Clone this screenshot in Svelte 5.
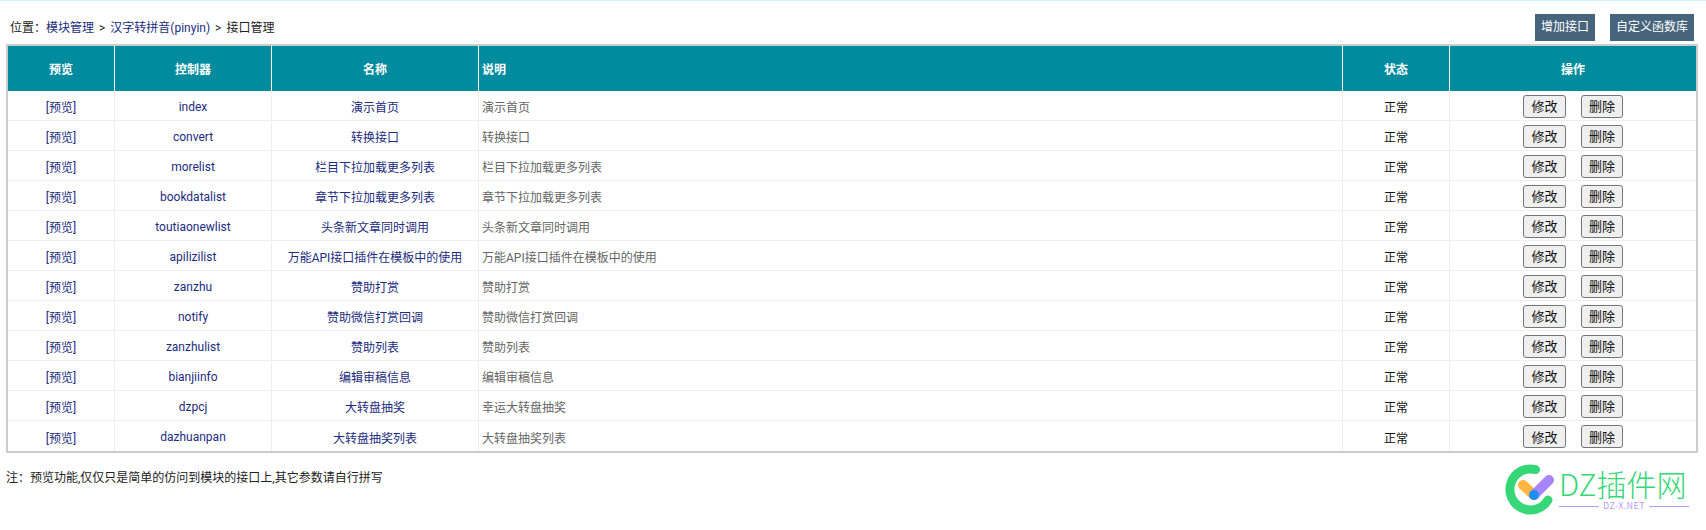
<script>
	const rows = [
		['index', '演示首页', '演示首页'],
		['convert', '转换接口', '转换接口'],
		['morelist', '栏目下拉加载更多列表', '栏目下拉加载更多列表'],
		['bookdatalist', '章节下拉加载更多列表', '章节下拉加载更多列表'],
		['toutiaonewlist', '头条新文章同时调用', '头条新文章同时调用'],
		['apilizilist', '万能API接口插件在模板中的使用', '万能API接口插件在模板中的使用'],
		['zanzhu', '赞助打赏', '赞助打赏'],
		['notify', '赞助微信打赏回调', '赞助微信打赏回调'],
		['zanzhulist', '赞助列表', '赞助列表'],
		['bianjiinfo', '编辑审稿信息', '编辑审稿信息'],
		['dzpcj', '大转盘抽奖', '幸运大转盘抽奖'],
		['dazhuanpan', '大转盘抽奖列表', '大转盘抽奖列表']
	];
</script>

<div class="page">
	<div class="topbar">
		<div class="crumbs">
			位置：<a href="#m">模块管理</a><span class="sep">&gt;</span><a href="#p">汉字转拼音(pinyin)</a><span class="sep">&gt;</span>接口管理
		</div>
		<div class="top-actions">
			<a class="top-btn add" href="#a">增加接口</a>
			<a class="top-btn lib" href="#f">自定义函数库</a>
		</div>
	</div>

	<div class="table-wrap">
		<table>
			<colgroup>
				<col style="width: 106px" />
				<col style="width: 157px" />
				<col style="width: 207px" />
				<col />
				<col style="width: 107px" />
				<col style="width: 247px" />
			</colgroup>
			<thead>
				<tr>
					<th>预览</th>
					<th>控制器</th>
					<th>名称</th>
					<th class="left">说明</th>
					<th>状态</th>
					<th>操作</th>
				</tr>
			</thead>
			<tbody>
				{#each rows as row}
					<tr>
						<td><a href="#v">[预览]</a></td>
						<td><a href="#c">{row[0]}</a></td>
						<td><a href="#n">{row[1]}</a></td>
						<td class="desc">{row[2]}</td>
						<td>正常</td>
						<td class="ops">
							<button class="edit">修改</button>
							<button class="del">删除</button>
						</td>
					</tr>
				{/each}
			</tbody>
		</table>
	</div>

	<p class="note">注：预览功能,仅仅只是简单的仿问到模块的接口上,其它参数请自行拼写</p>

	<div class="watermark">
		<svg width="56" height="56" viewBox="0 0 56 56" fill="none">
			<path d="M32.5 7.6 A20.5 20.5 0 1 0 45 38" stroke="#36d777" stroke-width="9" stroke-linecap="round" />
			<path d="M20 23 L31 33" stroke="#ffb83f" stroke-width="10" stroke-linecap="round" />
			<path d="M31 33 L46 18" stroke="#a884fa" stroke-width="10" stroke-linecap="round" />
			<circle cx="31" cy="33" r="5" fill="#1e8eff" />
		</svg>
		<div class="brand">
			<div class="brand-name">DZ插件网</div>
			<div class="brand-sub"><span class="rule"></span><span>DZ-X.NET</span><span class="rule"></span></div>
		</div>
	</div>
</div>

<style>
	:global(body) {
		margin: 0;
		background: #fff;
	}

	.page {
		position: relative;
		height: 530px;
		box-sizing: border-box;
		border-top: 1px solid #ccf2ff;
		padding: 0 8px 0 6px;
		font-family: Roboto, "Noto Sans CJK SC", sans-serif;
		font-size: 12px;
		color: #222;
		overflow: hidden;
	}

	a {
		color: #1c2c80;
		text-decoration: none;
	}

	.topbar {
		display: flex;
		justify-content: space-between;
		align-items: center;
		height: 43px;
		box-sizing: border-box;
	}

	.crumbs {
		padding: 11px 0 0 4px;
		line-height: 16px;
	}

	.sep {
		margin: 0 5px;
	}

	.top-actions {
		display: flex;
		gap: 15px;
		padding: 9px 4px 0 0;
	}

	.top-btn {
		display: block;
		height: 27px;
		line-height: 27px;
		text-align: center;
		background: #46647c;
		color: #fff;
	}

	.add {
		width: 60px;
	}

	.lib {
		width: 84px;
	}

	.table-wrap {
		border: 2px solid #ccc;
	}

	table {
		width: 100%;
		border-collapse: separate;
		border-spacing: 0;
		table-layout: fixed;
	}

	th {
		height: 45px;
		padding: 0;
		background: #008c9e;
		color: #fff;
		font-weight: 700;
		text-align: center;
		border-left: 1px solid #fff;
	}

	th:first-child,
	td:first-child {
		border-left: 0;
	}

	th.left {
		text-align: left;
		padding-left: 3px;
	}

	td {
		height: 27px;
		padding: 2px 0 0;
		box-sizing: content-box;
		text-align: center;
		border-left: 1px solid #eee;
		border-bottom: 1px solid #eee;
		color: #111;
	}

	tbody tr:last-child td {
		border-bottom: 0;
		height: 28px;
	}

	td.desc {
		text-align: left;
		padding-left: 3px;
		color: #666;
	}

	td.ops {
		font-size: 0;
		padding-top: 1px;
		height: 28px;
	}

	tbody tr:last-child td.ops {
		height: 29px;
	}

	button {
		height: 23px;
		padding: 0;
		box-sizing: border-box;
		background: #efefef;
		border: 1px solid #767676;
		border-radius: 3px;
		font-family: "Noto Sans CJK SC", sans-serif;
		font-size: 13px;
		line-height: 20px;
		color: #111;
		vertical-align: middle;
	}

	.edit {
		width: 43px;
		margin-right: 15px;
	}

	.del {
		width: 42px;
	}

	.note {
		width: fit-content;
		margin: 17px 0 0;
		line-height: 16px;
	}

	/* site watermark sits over the page corner */
	.watermark {
		position: absolute;
		left: 1503px;
		top: 461px;
		display: flex;
	}

	.brand {
		margin-top: 4px;
		width: 130px;
		font-family: "Noto Sans CJK SC", sans-serif;
	}

	.brand-name {
		font-size: 30px;
		line-height: 34px;
		font-weight: 300;
		color: #36d777;
		white-space: nowrap;
	}

	.brand-sub {
		display: flex;
		align-items: center;
		gap: 4px;
		font-size: 9px;
		line-height: 12px;
		letter-spacing: 0.4px;
		color: #b79bfb;
	}

	.rule {
		flex: 1;
		height: 1px;
		background: #b79bfb;
	}
</style>
